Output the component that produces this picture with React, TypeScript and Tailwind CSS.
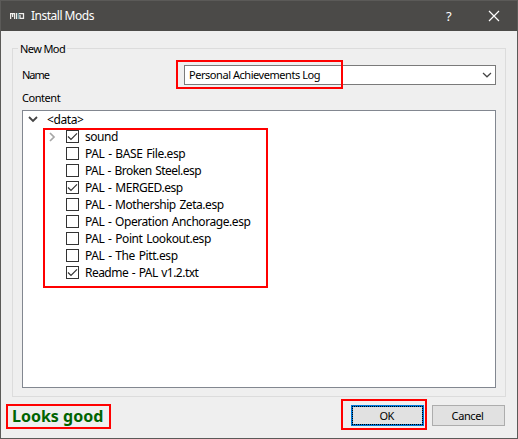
import type { ReactNode } from "react";

const ui = "font-['Noto_Sans','Open_Sans',sans-serif]";

type Item = { label: string; checked: boolean; folder?: boolean; spacing: string };

const items: Item[] = [
  { label: "sound", checked: true, folder: true, spacing: "tracking-[-0.45px]" },
  { label: "PAL - BASE File.esp", checked: false, spacing: "tracking-[-0.4px]" },
  { label: "PAL - Broken Steel.esp", checked: false, spacing: "tracking-[-0.54px]" },
  { label: "PAL - MERGED.esp", checked: true, spacing: "tracking-[-0.42px]" },
  { label: "PAL - Mothership Zeta.esp", checked: false, spacing: "tracking-[-0.45px]" },
  { label: "PAL - Operation Anchorage.esp", checked: false, spacing: "tracking-[-0.44px]" },
  { label: "PAL - Point Lookout.esp", checked: false, spacing: "tracking-[-0.42px]" },
  { label: "PAL - The Pitt.esp", checked: false, spacing: "tracking-[-0.4px]" },
  { label: "Readme - PAL v1.2.txt", checked: true, spacing: "tracking-[-0.53px]" },
];

function AppLogo() {
  return (
    <svg width="15" height="8" viewBox="0 0 15 8" fill="none" stroke="#f1efec">
      <path d="M.6 7V1.5H4.6V7M2.6 1.5V5" strokeWidth="1.25" />
      <path d="M6.5 1V7" strokeWidth="1.1" />
      <path d="M8.2 1V7" stroke="#8cc3cf" strokeWidth="1" />
      <path d="M9 1.6H13.5V6.4H10V3" strokeWidth="1.25" />
    </svg>
  );
}

function Checkbox({ checked }: { checked: boolean }) {
  return (
    <span className="flex size-[13px] shrink-0 items-center justify-center border border-[#333] bg-white">
      {checked && (
        <svg width="11" height="11" viewBox="0 0 11 11" fill="none">
          <path d="M1 5.5L4 8.5L10 2.3" stroke="#333" strokeWidth="1.2" />
        </svg>
      )}
    </span>
  );
}

function Highlight({ className }: { className: string }) {
  return <div className={`pointer-events-none absolute border-2 border-[#f00] ${className}`} />;
}

function TreeRow({ item }: { item: Item }) {
  return (
    <li className="flex h-[17px] items-center pl-[25px]">
      <span className="flex w-[18px] shrink-0">
        {item.folder && (
          <svg width="8" height="10" viewBox="0 0 8 10" fill="none">
            <path d="M2 1L6 5L2 9" stroke="#a6a6a6" strokeWidth="1.7" />
          </svg>
        )}
      </span>
      <Checkbox checked={item.checked} />
      <span className={`ml-1.5 whitespace-nowrap leading-[17px] [word-spacing:1px] ${item.spacing}`}>{item.label}</span>
    </li>
  );
}

function Label({ children, className = "" }: { children: ReactNode; className?: string }) {
  return <span className={`whitespace-nowrap text-[11px] leading-4 ${className}`}>{children}</span>;
}

export default function App() {
  return (
    <div className={`relative flex h-[439px] w-[518px] flex-col overflow-hidden border border-[#5b5a58] bg-[#efefef] text-[12px] text-black ${ui}`}>
      <header className="flex h-[30px] shrink-0 items-center bg-[#4b4a48] pl-[9px] text-white">
        <AppLogo />
        <h1 className="ml-[6px] text-[12px] leading-4 tracking-[-0.5px]">Install Mods</h1>
        <span className="ml-auto w-[8px] text-[13px] leading-4">?</span>
        <svg className="mr-[17px] ml-[34px]" width="12" height="12" viewBox="0 0 12 12" fill="none">
          <path d="M1 1L11 11M11 1L1 11" stroke="#fff" strokeWidth="1.2" />
        </svg>
      </header>

      <main className="flex flex-1 flex-col px-[11px] pt-[17px] pb-[11px]">
        <section className="relative flex h-[349px] flex-col border border-[#dcdcdc] px-[9px] pt-4">
          <Label className="absolute -top-[8px] left-[5px] bg-[#efefef] px-[2px] tracking-[-0.6px]">New Mod</Label>
          <div className="flex h-5 items-center">
            <Label className="w-[162px] tracking-[-1px]">Name</Label>
            <div className="flex h-5 flex-1 items-center justify-between border border-[#7a7a7a] bg-white pr-[3px] pl-1">
              <Label className="tracking-[-0.45px]">Personal Achievements Log</Label>
              <svg width="10" height="6" viewBox="0 0 10 6" fill="none">
                <path d="M1 1L5 4.8L9 1" stroke="#444" strokeWidth="1.2" />
              </svg>
            </div>
          </div>
          <Label className="mt-[5px] tracking-[-0.45px]">Content</Label>
          <ul className="mt-1 h-[278px] border border-[#828790] bg-white">
            <li className="flex h-[17px] items-center pl-[5px]">
              <svg width="10" height="7" viewBox="0 0 10 7" fill="none">
                <path d="M1 1L5 5L9 1" stroke="#444" strokeWidth="1.8" />
              </svg>
              <span className="ml-[9px] tracking-[-0.4px]">&lt;data&gt;</span>
            </li>
            {items.map((item) => (
              <TreeRow key={item.label} item={item} />
            ))}
          </ul>
        </section>

        <footer className="mt-2 mr-px flex h-[21px] items-center">
          <strong className="mr-auto text-[16px] leading-5 text-[#006400]">Looks good</strong>
          <button className="relative flex h-[21px] w-[73px] items-center justify-center border-2 border-[#0078d7] bg-[#e1e1e1]">
            <Label className="mr-[2px] tracking-[-0.6px]">OK</Label>
            <svg className="absolute -top-px -left-px" width="71" height="19" viewBox="0 0 71 19" fill="none">
              <path
                d="M0 .5H71M0 18.5H71M.5 0V19M70.5 0V19"
                stroke="#000"
                strokeDasharray="1 1"
                shapeRendering="crispEdges"
              />
            </svg>
          </button>
          <button className="ml-2 flex h-[21px] w-[73px] items-center justify-center border border-[#adadad] bg-[#e1e1e1]">
            <Label className="mr-[2px] tracking-[-0.4px]">Cancel</Label>
          </button>
        </footer>
      </main>

      <Highlight className="top-[59px] left-[175px] h-[29px] w-[167px]" />
      <Highlight className="top-[127px] left-[42px] h-[160px] w-[225px]" />
      <Highlight className="top-[403px] left-[5px] h-[25px] w-[105px]" />
      <Highlight className="top-[398px] left-[340px] h-[31px] w-[86px]" />
    </div>
  );
}
